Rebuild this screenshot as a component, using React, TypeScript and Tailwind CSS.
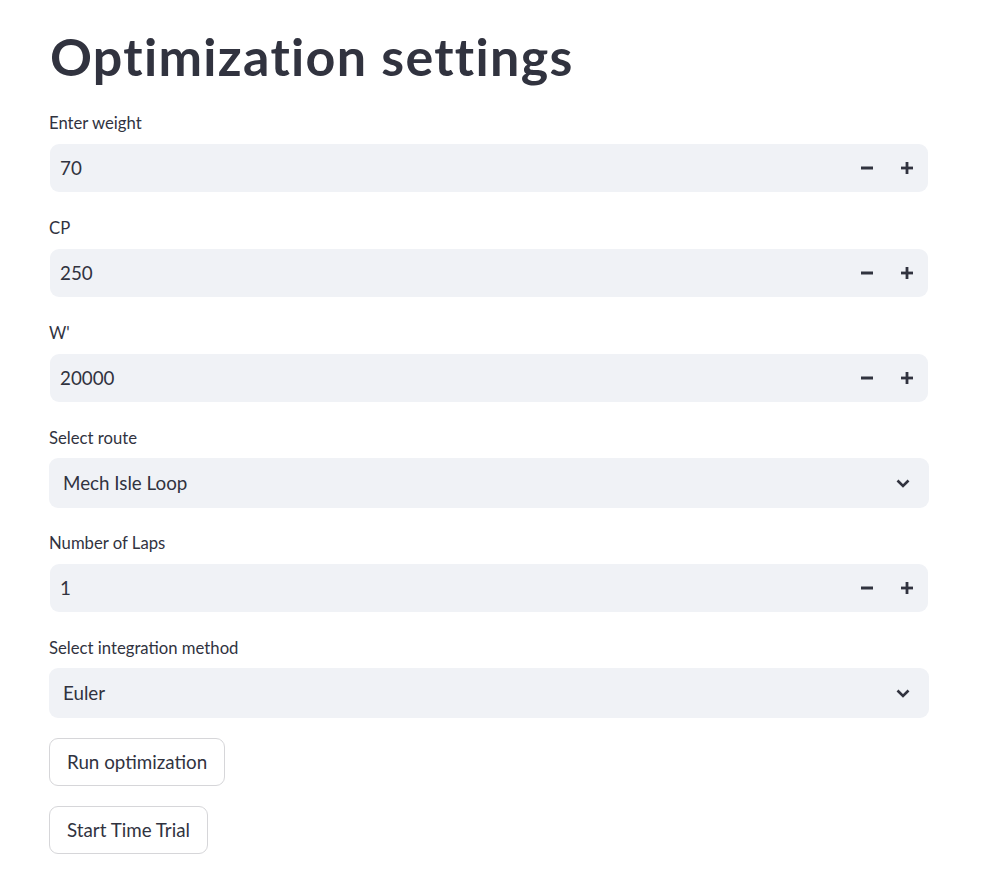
import React from "react";

const font = { fontFamily: "Lato, 'Noto Sans', sans-serif" };

const Minus = () => (
  <svg width="14" height="14" viewBox="0 0 14 14">
    <rect x="1" y="5.5" width="12" height="3" fill="#31333f" />
  </svg>
);

const Plus = () => (
  <svg width="14" height="14" viewBox="0 0 14 14">
    <rect x="1" y="5.6" width="12" height="2.8" fill="#31333f" />
    <rect x="5.6" y="1" width="2.8" height="12" fill="#31333f" />
  </svg>
);

const Chevron = () => (
  <svg width="16" height="16" viewBox="0 0 16 16" fill="none">
    <path d="M2.5 5.5 L8 11 L13.5 5.5" stroke="#31333f" strokeWidth="2.6" />
  </svg>
);

const NumberInput = ({ label, value, gap = "mb-[24px]" }: { label: string; value: string; gap?: string }) => (
  <div className={`flex flex-col ${gap}`}>
    <div className="h-[24px] mt-px mb-[8px] flex items-center text-[16.7px] text-[#31333f]">{label}</div>
    <div className="mx-px h-[48px] rounded-[9px] bg-[#f0f2f6] flex items-center">
      <span className="flex-1 pl-[10px] text-[18.8px] text-[#31333f]">{value}</span>
      <button className="w-[40px] h-full flex items-center justify-center">
        <Minus />
      </button>
      <button className="w-[40px] h-full flex items-center justify-center mr-[1px]">
        <Plus />
      </button>
    </div>
  </div>
);

const Select = ({ label, value, gap }: { label: string; value: string; gap: string }) => (
  <div className={`flex flex-col ${gap}`}>
    <div className="h-[24px] mt-px mb-[7px] flex items-center text-[16.7px] text-[#31333f]">{label}</div>
    <div className="h-[50px] rounded-[9px] bg-[#f0f2f6] flex items-center">
      <span className="flex-1 pl-[14px] text-[18.8px] text-[#31333f]">{value}</span>
      <span className="w-[52px] flex items-center justify-center">
        <Chevron />
      </span>
    </div>
  </div>
);

const Btn = ({ children }: { children: React.ReactNode }) => (
  <button className="h-[48px] px-[17px] rounded-[9px] border border-[#d6d6d9] bg-white text-[18.8px] text-[#31333f]">
    {children}
  </button>
);

export default function App() {
  return (
    <main className="min-h-screen bg-white" style={font}>
      <div className="ml-[49px] w-[880px] pt-[21px] flex flex-col">
        <h1 className="text-[52px] leading-[70px] font-bold text-[#31333f] ml-px mb-[20px] tracking-[1.3px]">
          Optimization settings
        </h1>
        <NumberInput label="Enter weight" value="70" />
        <NumberInput label="CP" value="250" />
        <NumberInput label="W'" value="20000" />
        <Select label="Select route" value="Mech Isle Loop" gap="mb-[23px]" />
        <NumberInput label="Number of Laps" value="1" />
        <Select label="Select integration method" value="Euler" gap="mb-[20px]" />
        <div className="flex flex-col items-start gap-[20px]">
          <Btn>Run optimization</Btn>
          <Btn>Start Time Trial</Btn>
        </div>
      </div>
    </main>
  );
}
